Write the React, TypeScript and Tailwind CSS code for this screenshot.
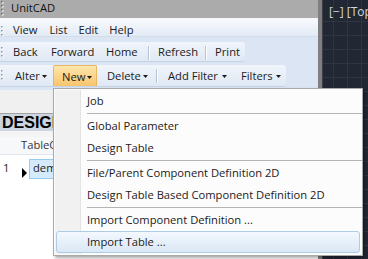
import React from "react";

const Tri = () => (
  <svg width="5" height="3" viewBox="0 0 5 3" className="shrink-0">
    <polygon points="0,0 5,0 2.5,3" fill="#1b1b1b" />
  </svg>
);

const Grip = ({ h, color = "#8a96a8" }: { h: number; color?: string }) => {
  const dots = [];
  for (let y = 2; y + 2 <= h - 1; y += 4) {
    dots.push(<rect key={"w" + y} x={2} y={y + 1} width={1.5} height={1.5} fill="#ffffff" />);
    dots.push(<rect key={"d" + y} x={1} y={y} width={1.5} height={1.5} fill={color} />);
  }
  return (
    <svg width="4" height={h} className="shrink-0">
      {dots}
    </svg>
  );
};

const Sep = ({ w }: { w: string }) => (
  <div className={`${w} h-full flex justify-center items-center`}>
    <div className="w-[1px] h-[14px] bg-[#b6c3d6]" />
    <div className="w-[1px] h-[14px] bg-[#ffffff]" />
  </div>
);

const MenuItem = ({ label, hl = false }: { label: string; hl?: boolean }) => (
  <div
    className={
      hl
        ? "relative h-[22px] flex items-center pl-[30px] rounded-[3px] border border-[#aecbe8] bg-gradient-to-b from-[#f3f8fd] to-[#dbe8f5]"
        : "relative h-[22px] flex items-center pl-[31px]"
    }
  >
    <span className="whitespace-nowrap">{label}</span>
  </div>
);

const MenuSep = () => (
  <div className="h-[3px] ml-[31px] mr-[-2px] pt-[1px]">
    <div className="h-[1px] bg-[#b4b4b4]" />
  </div>
);

export default function App() {
  const vlines = [333, 347, 361].map((x) => x - 323);
  const hlines: number[] = [];
  for (let y = 21; y < 259; y += 14) hlines.push(y);
  return (
    <div className="relative w-[368px] h-[259px] overflow-hidden flex font-['Open_Sans',sans-serif] text-[11.2px] text-[#1b1b1b] bg-white">
      {/* left application column */}
      <div className="w-[318px] h-full flex flex-col shrink-0">
        {/* title bar */}
        <div className="h-[18px] bg-[#ababab] flex items-center pb-[2px]">
          <Grip h={18} color="#6f6f6f" />
          <span className="ml-[7px] text-[#111]">UnitCAD</span>
        </div>
        <div className="h-[2px] bg-[#f4f6fa]" />
        {/* menu strip */}
        <div className="h-[17px] bg-gradient-to-b from-[#f7f9fd] to-[#e2eaf5] border-b border-[#d3ddeb] flex items-center pt-[4px]">
          <Grip h={13} />
          <span className="ml-[9px]">View</span>
          <span className="ml-[12px]">List</span>
          <span className="ml-[11px]">Edit</span>
          <span className="ml-[11px]">Help</span>
        </div>
        {/* toolbar area */}
        <div className="h-[53px] bg-[#dbe5f3] flex flex-col pt-[5px] gap-[3px]">
          <div className="w-[245px] h-[20px] flex items-center pt-[2px] bg-gradient-to-b from-[#f1f5fb] to-[#dfe8f4] rounded-r-[3px] border-b border-[#c6d3e4]">
            <div className="w-[7px] h-full flex items-center">
              <Grip h={16} />
            </div>
            <div className="w-[38px] pl-[6px]">Back</div>
            <div className="w-[55px] pl-[6px]">Forward</div>
            <div className="w-[46px] pl-[6px]">Home</div>
            <Sep w="w-[6px]" />
            <div className="w-[51px] pl-[6px]">Refresh</div>
            <Sep w="w-[6px]" />
            <div className="w-[36px] pl-[6px]">Print</div>
          </div>
          <div className="w-[286px] h-[22px] flex items-stretch bg-gradient-to-b from-[#f1f5fb] to-[#dfe8f4] rounded-r-[3px] border-b border-[#c6d3e4]">
            <div className="w-[8px] flex items-center">
              <Grip h={16} />
            </div>
            <div className="w-[45px] pl-[7px] pr-[6px] pt-[2px] flex items-center justify-between">
              <span>Alter</span>
              <Tri />
            </div>
            <div className="w-[44px] pl-[8px] pr-[4px] pt-[2px] flex items-center justify-between bg-gradient-to-b from-[#fde6ad] to-[#f8c46c] border border-[#e9b660] border-b-0 rounded-t-[2px]">
              <span>New</span>
              <Tri />
            </div>
            <div className="w-[56px] pl-[10px] pr-[5px] pt-[2px] flex items-center justify-between">
              <span>Delete</span>
              <Tri />
            </div>
            <Sep w="w-[7px]" />
            <div className="w-[71px] pl-[8px] pr-[4px] pt-[2px] flex items-center justify-between">
              <span>Add Filter</span>
              <Tri />
            </div>
            <div className="w-[55px] pl-[10px] pr-[5px] pt-[2px] flex items-center justify-between">
              <span>Filters</span>
              <Tri />
            </div>
          </div>
        </div>
        {/* content */}
        <div className="flex-1 flex flex-col bg-white">
          <div className="h-[23px] bg-[#f0f0f0]" />
          <div className="h-[18px] bg-[#ccd4e0] border-t border-[#a3a3a3] flex items-center pl-[2px] font-['Liberation_Sans',sans-serif] font-bold text-[16px] text-black">
            DESIGN
          </div>
          <div className="h-[6px] bg-[#f4f4f4]" />
          <div className="h-[18px] flex items-center bg-[#f7f8fa] border-b border-[#e2e6ec]">
            <span className="ml-[21px] text-[#333]">TableCatalog</span>
          </div>
          <div className="h-[4px]" />
          <div className="h-[20px] flex items-start">
            <span className="ml-[3px] mt-[1px] w-[18px]">1</span>
            <svg width="5" height="10" viewBox="0 0 5 10" className="mt-[9px] ml-[1px]">
              <polygon points="0,0 5,5 0,10" fill="#000" />
            </svg>
            <div className="ml-[2px] h-[20px] w-[40px] bg-[#d5eafb] border border-[#97cbef] pl-[3px] flex items-center pb-[2px]">
              demo
            </div>
          </div>
          <div className="flex-1" />
        </div>
      </div>
      {/* splitter */}
      <div className="w-[4px] h-full bg-[#7f7f7f] shrink-0" />
      <div className="w-[1px] h-full bg-[#3b4049] shrink-0" />
      {/* dark viewport */}
      <div className="relative flex-1 h-full bg-[#212733] overflow-hidden">
        <svg className="absolute inset-0" width="45" height="259">
          {vlines.map((x) => (
            <line key={"v" + x} x1={x + 0.5} y1={0} x2={x + 0.5} y2={259} stroke="#2e3644" strokeWidth={1} />
          ))}
          {hlines.map((y) => (
            <line key={"h" + y} x1={0} y1={y + 0.5} x2={45} y2={y + 0.5} stroke="#2e3644" strokeWidth={1} />
          ))}
        </svg>
        <div className="relative pl-[6px] pt-[3px] whitespace-nowrap text-[12px] text-[#d2d6dc]">
          [−] [Top]
        </div>
      </div>
      {/* dropdown menu */}
      <div className="absolute left-[53px] top-[88px] w-[310px] h-[168px] bg-[#fcfcfc] border border-[#a9a9a9] shadow-[2px_2px_3px_rgba(0,0,0,0.35)] px-[2px] pt-[1px] pb-[2px] flex flex-col">
        <div className="absolute left-[1px] top-[1px] bottom-[1px] w-[25px] bg-[#f1f1f1]" />
        <div className="absolute left-[26px] top-[1px] bottom-[1px] w-[1px] bg-[#e3e3e3]" />
        <MenuItem label="Job" />
        <MenuSep />
        <MenuItem label="Global Parameter" />
        <MenuItem label="Design Table" />
        <MenuSep />
        <MenuItem label="File/Parent Component Definition 2D" />
        <MenuItem label="Design Table Based Component Definition 2D" />
        <MenuSep />
        <MenuItem label="Import Component Definition ..." />
        <MenuItem label="Import Table ..." hl />
      </div>
    </div>
  );
}
